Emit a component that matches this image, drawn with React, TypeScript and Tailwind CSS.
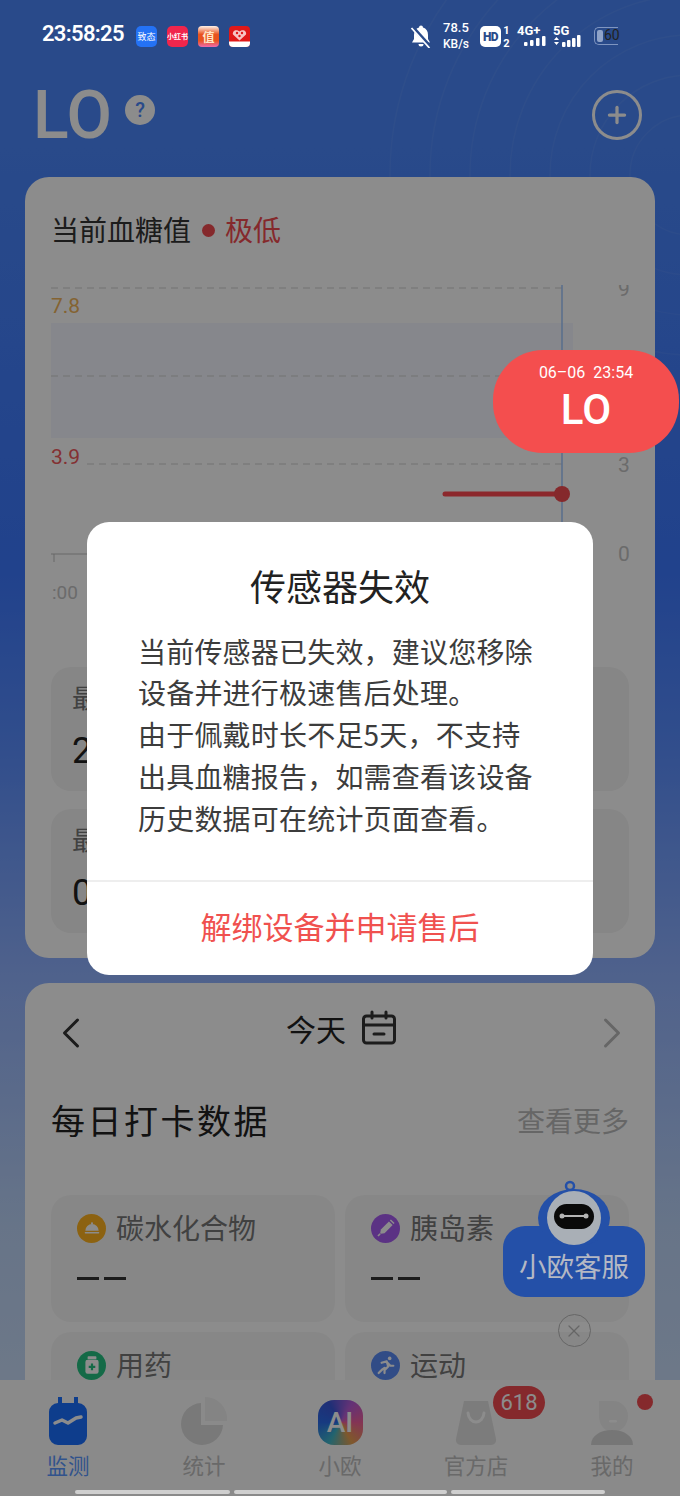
import { Plus, X, ChevronLeft, ChevronRight } from "lucide-react";

const DAILY = [
  { name: "碳水化合物", bg: "bg-[#ffb31f]", kind: "food" },
  { name: "胰岛素", bg: "bg-[#a75cf0]", kind: "syringe" },
  { name: "用药", bg: "bg-[#25c281]", kind: "pill" },
  { name: "运动", bg: "bg-[#5a8bf5]", kind: "run" },
];

function DailyIcon({ kind }: { kind: string }) {
  if (kind === "food")
    return (
      <svg viewBox="0 0 30 30" className="size-[20px]">
        <path d="M5 19a10 10 0 0 1 20 0z" fill="#fff" />
        <circle cx="15" cy="8" r="1.6" fill="#fff" />
        <rect x="4" y="21" width="22" height="2.4" rx="1.2" fill="#fff" />
      </svg>
    );
  if (kind === "syringe")
    return (
      <svg viewBox="0 0 30 30" className="size-[22px]">
        <path d="M19 6l5 5-11 11-5 1-1-1 1-5z" fill="#fff" />
        <path d="M7 23l-3 3M21 4l5 5" stroke="#fff" strokeWidth="2" />
      </svg>
    );
  if (kind === "pill")
    return (
      <svg viewBox="0 0 30 30" className="size-[22px]">
        <rect x="9" y="3" width="12" height="4" rx="1" fill="#fff" />
        <rect x="6" y="8" width="18" height="19" rx="3" fill="#fff" />
        <path d="M15 13v9M10.500 17.500h9" stroke="#25c281" strokeWidth="3" />
      </svg>
    );
  return (
    <svg viewBox="0 0 30 30" className="size-[22px]" fill="none" stroke="#fff" strokeWidth="3" strokeLinecap="round" strokeLinejoin="round">
      <circle cx="20" cy="6" r="2.500" fill="#fff" stroke="none" />
      <path d="M9 12l7-2 2 7-5 5v4M17 12l4 4h4M13 19l-3 2-5 5" />
    </svg>
  );
}

function StatusBar() {
  return (
    <div className="absolute left-0 top-0 z-30 h-[70px] w-full text-white">
      <div className="absolute left-[42px] top-[20px] font-['Roboto',sans-serif] text-[22px] font-semibold leading-[28px] tracking-[-0.7px]">
        23:58:25
      </div>
      <div className="absolute left-[136px] top-[26px] flex gap-[10px]">
        <div className="flex h-[21px] w-[21px] items-center justify-center rounded-[5px] bg-[#2472f5] text-[9px]">致态</div>
        <div className="flex h-[21px] w-[21px] items-center justify-center rounded-[5px] bg-[#f0264c] text-[7px] font-bold">小红书</div>
        <div className="flex h-[21px] w-[21px] items-center justify-center rounded-[4px] bg-[linear-gradient(#fff2e8_0%,#e8531f_40%,#e8531f_70%,#ee6bb0_100%)] text-[12px] font-bold text-[#ffe7c8]">值</div>
        <svg viewBox="0 0 21 21" className="size-[21px] rounded-[4px]">
          <rect width="21" height="21" fill="#e01818" />
          <path d="M10.500 14.500 4 8.500C3 5 7 2.500 10.500 5.500 14 2.500 18 5 17 8.500z" fill="#f7c4c4" />
          <circle cx="8" cy="7" r="1.200" fill="#e01818" />
          <circle cx="13" cy="7" r="1.200" fill="#e01818" />
          <circle cx="10.500" cy="10" r="1.200" fill="#e01818" />
          <rect y="15.500" width="21" height="5.500" fill="#fff" />
        </svg>
      </div>
      <svg viewBox="0 0 24 24" className="absolute left-[409px] top-[24px] size-[24px]">
        <path d="M12 1.500a2 2 0 0 1 2 2c3.300.9 5 3.700 5 7.500v4l2 3.500H3L5 15v-4c0-3.800 1.700-6.600 5-7.500a2 2 0 0 1 2-2z" fill="#fff" />
        <path d="M9.500 20h5a2.500 2.500 0 0 1-5 0z" fill="#fff" />
        <path d="M3 2.500l18 20" stroke="#2a4b8a" strokeWidth="3.500" />
        <path d="M2.500 4l18 20" stroke="#fff" strokeWidth="1.800" />
      </svg>
      <div className="absolute left-[443px] top-[19px] w-[30px] font-['Roboto',sans-serif] text-[13px] font-medium leading-[17px]">
        <div>78.5</div>
        <div className="text-[12px]">KB/s</div>
      </div>
      <div className="absolute left-[480px] top-[26px] flex h-[21px] w-[21px] items-center justify-center rounded-[5px] bg-white font-['Roboto',sans-serif] text-[12px] font-black tracking-[-0.5px] text-[#2a4b8a]">
        HD
      </div>
      <div className="absolute left-[502px] top-[24px] w-[9px] text-center font-['Roboto',sans-serif] text-[11px] font-bold leading-[13px]">
        <div>1</div>
        <div>2</div>
      </div>
      <div className="absolute left-[517px] top-[23px] font-['Roboto',sans-serif] text-[13px] font-bold leading-[15px]">4G+</div>
      <div className="absolute left-[553px] top-[23px] font-['Roboto',sans-serif] text-[13px] font-bold leading-[15px]">5G</div>
      <svg viewBox="0 0 30 10" className="absolute left-[524px] top-[36px] h-[10px] w-[30px]" fill="#fff">
        <rect x="0" y="6" width="3.500" height="4" rx="1" />
        <rect x="6" y="4" width="3.500" height="6" rx="1" />
        <rect x="12" y="2" width="3.500" height="8" rx="1" />
        <rect x="18" y="0" width="3.500" height="10" rx="1" />
      </svg>
      <svg viewBox="0 0 30 12" className="absolute left-[553px] top-[35px] h-[12px] w-[30px]" fill="#fff">
        <path d="M1 5l2.500-3L6 5zM1 7h5l-2.500 3z" />
        <rect x="9" y="7" width="3.500" height="5" rx="1" />
        <rect x="14" y="5" width="3.500" height="7" rx="1" />
        <rect x="19" y="3" width="3.500" height="9" rx="1" />
        <rect x="24" y="0" width="3.500" height="12" rx="1" />
      </svg>
      <div className="absolute left-[594px] top-[27px] flex h-[18px] w-[24px] items-center rounded-l-[5px] border border-r-0 border-[#7f95c0] pl-[2px]">
        <div className="h-[12px] w-[6px] rounded-[2px] bg-[#8fa3c8]" />
      </div>
      <div className="absolute left-[604px] top-[26px] font-['Roboto',sans-serif] text-[14px] leading-[18px] text-[#222]">60</div>
    </div>
  );
}

function Chart() {
  return (
    <div className="relative h-[330px] w-full">
      <div className="absolute left-[26px] top-[73px] h-[115px] w-[522px] bg-[#f4f6ff]" />
      <svg className="absolute inset-0 h-full w-full" fill="none">
        <path d="M26 38H540M26 126H540M62 214H540" stroke="#d0d0d0" strokeWidth="1" strokeDasharray="7 5" />
        <path d="M537 35V330" stroke="#a0c8ff" strokeWidth="1.500" />
        <path d="M420 244H530" stroke="#ff4a50" strokeWidth="5" strokeLinecap="round" />
        <circle cx="537" cy="244" r="8" fill="#f24b50" />
        <path d="M26 304H62M29 304v8" stroke="#bdbdbd" strokeWidth="1" />
      </svg>
      <div className="absolute left-[26px] top-[43px] text-[21px] leading-[26px] text-[#f0b45a] font-['Roboto',sans-serif]">7.8</div>
      <div className="absolute left-[26px] top-[194px] text-[21px] leading-[26px] text-[#f0595e] font-['Roboto',sans-serif]">3.9</div>
      <div className="absolute left-[593px] top-[35px] h-[12px] w-[16px] overflow-hidden text-[21px] leading-[26px] text-[#c4c4c4] font-['Roboto',sans-serif]">
        <div className="-mt-[9px]">9</div>
      </div>
      <div className="absolute left-[593px] top-[202px] text-[21px] leading-[26px] text-[#c4c4c4] font-['Roboto',sans-serif]">3</div>
      <div className="absolute left-[593px] top-[291px] text-[21px] leading-[26px] text-[#c4c4c4] font-['Roboto',sans-serif]">0</div>
      <div className="absolute left-[27px] top-[330px] text-[19px] leading-[26px] text-[#c4c4c4] font-['Roboto',sans-serif]">:00</div>
    </div>
  );
}

function TabBar() {
  return (
    <div className="absolute bottom-0 left-0 z-0 grid h-[116px] w-full grid-cols-5 bg-[#fbfbfb] pt-[17px] text-center text-[21.500px] leading-[30px] text-[#c0c0c0]">
      <div className="flex flex-col items-center">
        <svg viewBox="0 0 40 48" className="h-[48px] w-[40px]">
          <path d="M10 0h4v6h12V0h4v6a9 9 0 0 1 9 9v24a9 9 0 0 1-9 9H10a9 9 0 0 1-9-9V15a9 9 0 0 1 9-9z" fill="#1b6fff" />
          <path d="M7 26l7-3 6 3 8-5 5-1" fill="none" stroke="#fff" strokeWidth="3.500" strokeLinecap="round" strokeLinejoin="round" />
        </svg>
        <div className="mt-[5px] text-[#5a98ff]">监测</div>
      </div>
      <div className="flex flex-col items-center">
        <svg viewBox="0 0 46 48" className="h-[48px] w-[46px]">
          <path d="M20 6a21 21 0 1 0 22 22H20z" fill="#dcdcdc" />
          <path d="M24 0a22 22 0 0 1 22 24H24z" fill="#f0f0f0" />
        </svg>
        <div className="mt-[5px]">统计</div>
      </div>
      <div className="flex flex-col items-center">
        <div className="mt-[3px] flex h-[45px] w-[45px] items-center justify-center rounded-[16px] bg-[conic-gradient(from_210deg,#3fb6c8,#2a6bea,#3a56d8,#b65cd8,#f0609a,#e8a050,#3fb6c8)] font-['Roboto',sans-serif] text-[28px] font-medium text-white">
          AI
        </div>
        <div className="mt-[5px]">小欧</div>
      </div>
      <div className="relative flex flex-col items-center">
        <svg viewBox="0 0 42 44" className="mt-[4px] h-[44px] w-[42px]">
          <path d="M9 0h24l8 38a5 5 0 0 1-5 6H6a5 5 0 0 1-5-6z" fill="#e2e2e2" />
          <path d="M13 12c1 12 15 12 16 0" fill="none" stroke="#fff" strokeWidth="3" strokeLinecap="round" />
        </svg>
        <div className="mt-[5px]">官方店</div>
        <div className="absolute left-[85px] top-[-11px] flex h-[33px] w-[52px] items-center justify-center rounded-full bg-[#f24b50] font-['Roboto',sans-serif] text-[22px] text-white">
          618
        </div>
      </div>
      <div className="relative flex flex-col items-center">
        <svg viewBox="0 0 42 44" className="mt-[4px] h-[44px] w-[42px]">
          <path d="M8 0h14a15 15 0 0 1 15 15c0 9-7 16-15 16S8 24 8 15z" fill="#f0f0f0" />
          <rect x="18" y="19" width="8" height="2.500" rx="1.200" fill="#fff" />
          <path d="M0 44c0-9 9-15 21-15s21 6 21 15z" fill="#d8d8d8" />
        </svg>
        <div className="mt-[5px]">我的</div>
        <div className="absolute left-[93px] top-[-3px] size-[16px] rounded-full bg-[#f24b50]" />
      </div>
    </div>
  );
}

export default function App() {
  return (
    <div className="relative h-[1496px] w-[680px] overflow-hidden bg-[linear-gradient(#4c88fb_0%,#4c88fb_8%,#3c78ff_38%,#5a8eff_50%,#93b4ff_66%,#bcd4f8_82%,#cfe0f8_100%)] font-['Noto_Sans_CJK_SC','Noto_Sans',sans-serif]">
      {/* Rings behind the header */}
      <svg className="absolute inset-0 h-[420px] w-full" fill="none" stroke="#fff" strokeOpacity="0.05" strokeWidth="1.500">
        <circle cx="690" cy="175" r="60" />
        <circle cx="690" cy="175" r="100" />
        <circle cx="690" cy="175" r="140" />
        <circle cx="690" cy="175" r="180" />
        <circle cx="690" cy="175" r="220" />
        <circle cx="690" cy="175" r="260" />
        <circle cx="690" cy="175" r="300" />
      </svg>

      <div className="relative flex flex-col">
        {/* Header */}
        <div className="flex h-[177px] items-start justify-between pl-[33px] pr-[38px] pt-[76px]">
          <div className="flex items-start">
            <span className="font-['Roboto',sans-serif] text-[66px] font-medium leading-[80px] text-white">LO</span>
            <span className="ml-[13px] mt-[19px] flex size-[30px] items-center justify-center rounded-full bg-white font-['Roboto',sans-serif] text-[20px] font-medium text-[#4c88fb]">?</span>
          </div>
          <div className="mt-[14px] flex size-[50px] items-center justify-center rounded-full border-[3.5px] border-white">
            <Plus className="size-[26px] text-white" strokeWidth={3} />
          </div>
        </div>

        {/* Glucose card */}
        <div className="mx-[25px] h-[781px] rounded-[24px] bg-white pt-[33px]">
          <div className="flex h-[40px] items-center pl-[26px] text-[28px] leading-[40px] text-[#333]">
            <span className="-mt-[2px]">当前血糖值</span>
            <span className="ml-[11px] size-[13px] rounded-full bg-[#f24b50]" />
            <span className="-mt-[2px] ml-[10px] text-[#f24b50]">极低</span>
          </div>
          <Chart />
          <div className="mt-[87px] flex flex-col gap-[18px] px-[26px]">
            {["2", "0"].map((v) => (
              <div key={v} className="h-[124px] rounded-[20px] bg-[#f4f4f4] pl-[21px] pt-[10px]">
                <div className="text-[26px] leading-[40px] text-[#777]">最低</div>
                <div className="mt-[12px] font-['Roboto',sans-serif] text-[36px] leading-[44px] text-[#222]">{v}.0</div>
              </div>
            ))}
          </div>
        </div>

        {/* Daily data card */}
        <div className="mx-[25px] mt-[25px] h-[520px] rounded-[24px] bg-white px-[26px] pt-[23px]">
          <div className="flex h-[44px] items-center justify-between">
            <ChevronLeft className="-my-[4px] -ml-[6px] mt-[6px] size-[52px] text-[#333]" strokeWidth={1.400} />
            <div className="flex items-center gap-[15px] text-[30px] leading-[44px] text-[#222]">
              今天
              <svg viewBox="0 0 36 36" className="size-[36px]" fill="none" stroke="#333" strokeWidth="3" strokeLinecap="round">
                <rect x="2.500" y="6" width="31" height="27" rx="3" />
                <path d="M2.500 15h31M11 2v6M25 2v6M13 24h10" />
              </svg>
            </div>
            <ChevronRight className="-my-[4px] -mr-[9px] mt-[6px] size-[52px] text-[#bbb]" strokeWidth={1.400} />
          </div>
          <div className="mt-[45px] flex h-[50px] items-center justify-between">
            <div className="text-[34px] tracking-[2.500px] leading-[50px] text-[#222]">每日打卡数据</div>
            <div className="text-[28px] leading-[50px] text-[#bbb]">查看更多</div>
          </div>
          <div className="mt-[50px] grid grid-cols-2 gap-[10px]">
            {DAILY.map((d) => (
              <div key={d.name} className="h-[127px] rounded-[20px] bg-[#f6f6f6] pl-[26px] pt-[15px]">
                <div className="flex items-center gap-[10px]">
                  <span className={`flex size-[29px] items-center justify-center rounded-full ${d.bg}`}>
                    <DailyIcon kind={d.kind} />
                  </span>
                  <span className="-mt-[2px] text-[28px] leading-[38px] text-[#777]">{d.name}</span>
                </div>
                <div className="mt-[31px] flex gap-[5px]">
                  <span className="h-[3px] w-[22px] bg-[#333]" />
                  <span className="h-[3px] w-[22px] bg-[#333]" />
                </div>
              </div>
            ))}
          </div>
        </div>
      </div>

      <TabBar />

      {/* Dim layer and dialog */}
      <div className="absolute inset-0 z-10 flex items-center justify-center bg-black/45">
        <div className="h-[453px] w-[506px] rounded-[22px] bg-white">
          <div className="pt-[37px] text-center text-[36px] leading-[52px] text-[#222]">传感器失效</div>
          <div className="mt-[20px] h-[249px] px-[51px] text-[28px] leading-[41.800px] tracking-[0.2px] text-[#3c3c3c]">
            <div>当前传感器已失效，建议您移除</div>
            <div>设备并进行极速售后处理。</div>
            <div>由于佩戴时长不足5天，不支持</div>
            <div>出具血糖报告，如需查看该设备</div>
            <div>历史数据可在统计页面查看。</div>
          </div>
          <div className="h-[2px] bg-[#eeeeee]" />
          <div className="flex h-[93px] items-center justify-center pb-[4px] text-[31px] text-[#f0514f]">解绑设备并申请售后</div>
        </div>
      </div>

      {/* Support robot, already in its dimmed colours */}
      <div className="absolute left-[503px] top-[1180px] z-[15] flex w-[142px] flex-col items-center">
        <svg viewBox="0 0 80 65" className="relative z-10 -mb-[19px] h-[65px] w-[80px]">
          <circle cx="36" cy="6" r="4" fill="none" stroke="#2450a8" strokeWidth="2.500" />
          <ellipse cx="40" cy="38" rx="36" ry="29" fill="#2450a8" />
          <circle cx="40" cy="38" r="27" fill="#a9afb6" />
          <rect x="20" y="24" width="40" height="25" rx="12.500" fill="#0a0a0a" />
          <path d="M28 36h24" stroke="#b5b5b5" strokeWidth="2" />
          <circle cx="28" cy="36" r="2.500" fill="#b5b5b5" />
          <circle cx="52" cy="36" r="2.500" fill="#b5b5b5" />
        </svg>
        <div className="flex h-[71px] w-[142px] items-center justify-center rounded-[22px] bg-[#2450a8] pt-[6px] text-[27.500px] leading-[36px] text-[#b4b8c4]">
          小欧客服
        </div>
        <div className="mt-[17px] flex size-[33px] items-center justify-center rounded-full border-[1.500px] border-[#666]">
          <X className="size-[20px] text-[#666]" strokeWidth={1.500} />
        </div>
      </div>

      {/* Value bubble stays above the dim layer */}
      <div className="absolute left-[493px] top-[350px] z-20 flex h-[103px] w-[186px] flex-col items-center rounded-[50px] bg-[#f44e4e] text-white">
        <div className="mt-[13px] whitespace-pre font-['Roboto',sans-serif] text-[16px] leading-[20px]">06–06  23:54</div>
        <div className="mt-[-1px] font-['Roboto',sans-serif] text-[42px] font-medium leading-[56px]">LO</div>
      </div>

      <StatusBar />

      <div className="absolute bottom-[2px] left-[75px] z-20 flex h-[4px] gap-[4px]">
        <span className="h-full w-[155px] rounded-full bg-[#cfcfcf]" />
        <span className="h-full w-[213px] rounded-full bg-[#cfcfcf]" />
        <span className="h-full w-[154px] rounded-full bg-[#cfcfcf]" />
      </div>
    </div>
  );
}
